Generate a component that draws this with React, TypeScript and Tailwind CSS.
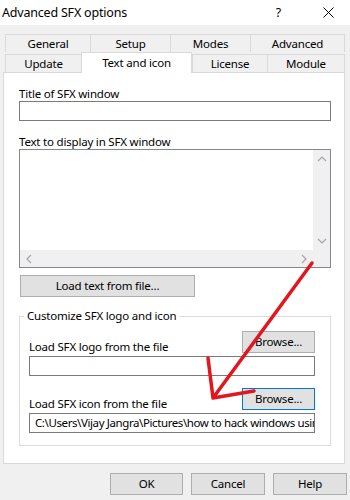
import React from "react";

const font = { fontFamily: '"Segoe UI", "Noto Sans", sans-serif' };

function Tab({ label, w, last }: { label: string; w: string; last?: boolean }) {
  return (
    <div
      className={`${w} h-[18px] flex items-center justify-center border-t border-l border-[#d9d9d9] bg-[#f0f0f0] text-[11.5px] text-black ${last ? "border-r" : ""}`}
    >
      {label}
    </div>
  );
}

function Btn({ label, className }: { label: string; className?: string }) {
  return (
    <div
      className={`h-[22px] flex items-center justify-center border border-[#adadad] bg-[#e1e1e1] text-[11.5px] text-black ${className ?? ""}`}
    >
      {label}
    </div>
  );
}

function Chevron({ d }: { d: string }) {
  return (
    <svg width="10" height="10" viewBox="0 0 10 10">
      <path d={d} fill="none" stroke="#a6a6a6" strokeWidth="1.2" />
    </svg>
  );
}

export default function App() {
  return (
    <div className="relative w-[350px] h-[500px] bg-[#f0f0f0] overflow-hidden text-black tracking-[-0.2px]" style={font}>
      {/* title bar */}
      <div className="h-[25px] bg-white flex items-center pl-[2px] pr-[16px]">
        <span className="text-[12.5px] leading-[16px] flex-1">Advanced SFX options</span>
        <span className="text-[12.5px] leading-[16px] mr-[42px]">?</span>
        <svg width="11" height="11" viewBox="0 0 11 11">
          <path d="M0.5 0.5 L10.5 10.5 M10.5 0.5 L0.5 10.5" stroke="#000" strokeWidth="1" />
        </svg>
      </div>

      {/* tabs */}
      <div className="mt-[9px] pl-[5px]">
        <div className="flex">
          <Tab label="General" w="w-[85px]" />
          <Tab label="Setup" w="w-[80px]" />
          <Tab label="Modes" w="w-[80px]" />
          <Tab label="Advanced" w="w-[95px]" last />
        </div>
        <div className="flex items-end">
          <Tab label="Update" w="w-[76px]" />
          <div className="relative z-10 w-[111px] h-[21px] -mb-[1px] flex items-start justify-center pt-[1px] border-t border-l border-r border-[#d9d9d9] bg-white text-[11.5px]">
            Text and icon
          </div>
          <Tab label="License" w="w-[75px]" />
          <Tab label="Module" w="w-[78px]" last />
        </div>
      </div>

      {/* panel */}
      <div className="ml-[3px] w-[342px] h-[392px] border border-[#d9d9d9] bg-white pl-[15px] pt-[13px] flex flex-col">
        <div className="text-[11.5px] leading-[15px]">Title of SFX window</div>
        <div className="w-[312px] h-[20px] border border-[#7a7a7a] bg-white" />
        <div className="mt-[13px] text-[11.5px] leading-[15px]">Text to display in SFX window</div>
        <div className="w-[312px] h-[119px] border border-[#828790] bg-white flex flex-col">
          <div className="flex flex-1">
            <div className="flex-1" />
            <div className="w-[17px] bg-[#f0f0f0] flex flex-col items-center justify-between py-[4px]">
              <Chevron d="M1 7 L5 3 L9 7" />
              <Chevron d="M1 3 L5 7 L9 3" />
            </div>
          </div>
          <div className="h-[17px] flex">
            <div className="flex-1 bg-[#f0f0f0] flex items-center justify-between px-[4px]">
              <Chevron d="M7 1 L3 5 L7 9" />
              <Chevron d="M3 1 L7 5 L3 9" />
            </div>
            <div className="w-[17px] bg-[#f0f0f0]" />
          </div>
        </div>
        <Btn label="Load text from file..." className="mt-[7px] ml-[1px] w-[175px]" />

        {/* group */}
        <div className="relative mt-[19px] w-[312px] h-[130px] border border-[#dcdcdc] pl-[9px] pr-[15px] pt-[14px]">
          <div className="absolute -top-[9px] left-[4px] bg-white px-[3px] text-[11.5px] leading-[15px]">
            Customize SFX logo and icon
          </div>
          <div className="flex items-end justify-between h-[22px]">
            <div className="text-[11.5px] leading-[15px] -mb-[1px]">Load SFX logo from the file</div>
            <Btn label="Browse..." className="w-[73px]" />
          </div>
          <div className="mt-[3px] h-[20px] border border-[#7a7a7a] bg-white" />
          <div className="mt-[12px] flex items-end justify-between h-[22px]">
            <div className="text-[11.5px] leading-[15px] -mb-[1px]">Load SFX icon from the file</div>
            <div className="w-[73px] h-[22px] flex items-center justify-center border border-[#0078d7] bg-[#e1e1e1] text-[11.5px]">
              Browse...
            </div>
          </div>
          <div className="mt-[3px] h-[20px] border border-[#7a7a7a] bg-white overflow-hidden whitespace-nowrap pl-[5px] text-[11.5px] leading-[18px] tracking-[-0.4px]">
            C:\Users\Vijay Jangra\Pictures\how to hack windows using
          </div>
        </div>
      </div>

      {/* bottom buttons */}
      <div className="mt-[9px] flex justify-end gap-[8px] pr-[3px]">
        <Btn label="OK" className="w-[73px]" />
        <Btn label="Cancel" className="w-[74px]" />
        <Btn label="Help" className="w-[74px]" />
      </div>

      {/* red arrow annotation */}
      <svg className="absolute left-0 top-0 pointer-events-none" width="350" height="500" viewBox="0 0 350 500">
        <path
          d="M312 263 L213 398 M208 358 L213 398 L254 391"
          fill="none"
          stroke="#e3161f"
          strokeWidth="3.5"
          strokeLinecap="round"
          strokeLinejoin="round"
        />
      </svg>
    </div>
  );
}
